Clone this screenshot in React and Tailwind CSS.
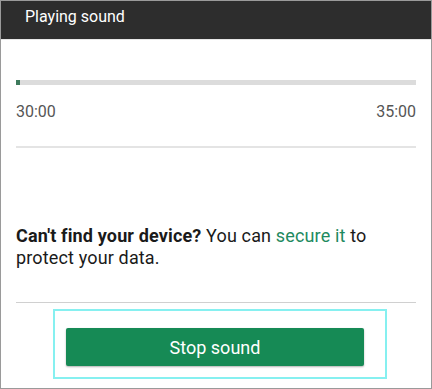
import React from "react";

function App() {
  return (
    <div
      className="w-[432px] h-[389px] bg-white border border-[#9a9a9a] flex flex-col overflow-hidden"
      style={{ fontFamily: "Roboto, 'Liberation Sans', sans-serif" }}
    >
      {/* Title bar */}
      <div className="h-[39px] shrink-0 bg-[#2d2d2d] border-b border-[#e6e6e6] flex items-center pl-6">
        <span className="text-white text-[16px] leading-none -mt-[6px]">Playing sound</span>
      </div>

      <div className="flex-1 flex flex-col px-[15px]">
        {/* Progress */}
        <div className="mt-[40px] h-[5px] bg-[#dcdcdc] flex">
          <div className="w-[4px] h-full bg-[#3d7a5c]" />
        </div>
        <div className="mt-[18px] flex justify-between text-[16px] leading-[18px] text-[#555]">
          <span>30:00</span>
          <span>35:00</span>
        </div>
        <div className="mt-[25px] h-[2px] bg-[#e4e4e4]" />

        {/* Message */}
        <p className="mt-[77px] text-[18px] leading-[22px] tracking-[0.15px] text-[#1a1a1a]">
          <span className="font-bold">Can't find your device?</span> You can{" "}
          <span className="text-[#1e8a60]">secure it</span> to protect your data.
        </p>

        <div className="mt-[33px] h-px bg-[#d0d0d0]" />

        {/* Action */}
        <div className="mt-[6px] ml-[37px] w-[334px] h-[70px] border-2 border-[#86f0f0] pt-[17px] pl-[11px]">
          <button className="w-[298px] h-[38px] bg-[#168a55] rounded-[2px] shadow-[0_1px_2px_rgba(0,0,0,0.3)] text-white text-[18px]">
            Stop sound
          </button>
        </div>
      </div>
    </div>
  );
}

export default App;
